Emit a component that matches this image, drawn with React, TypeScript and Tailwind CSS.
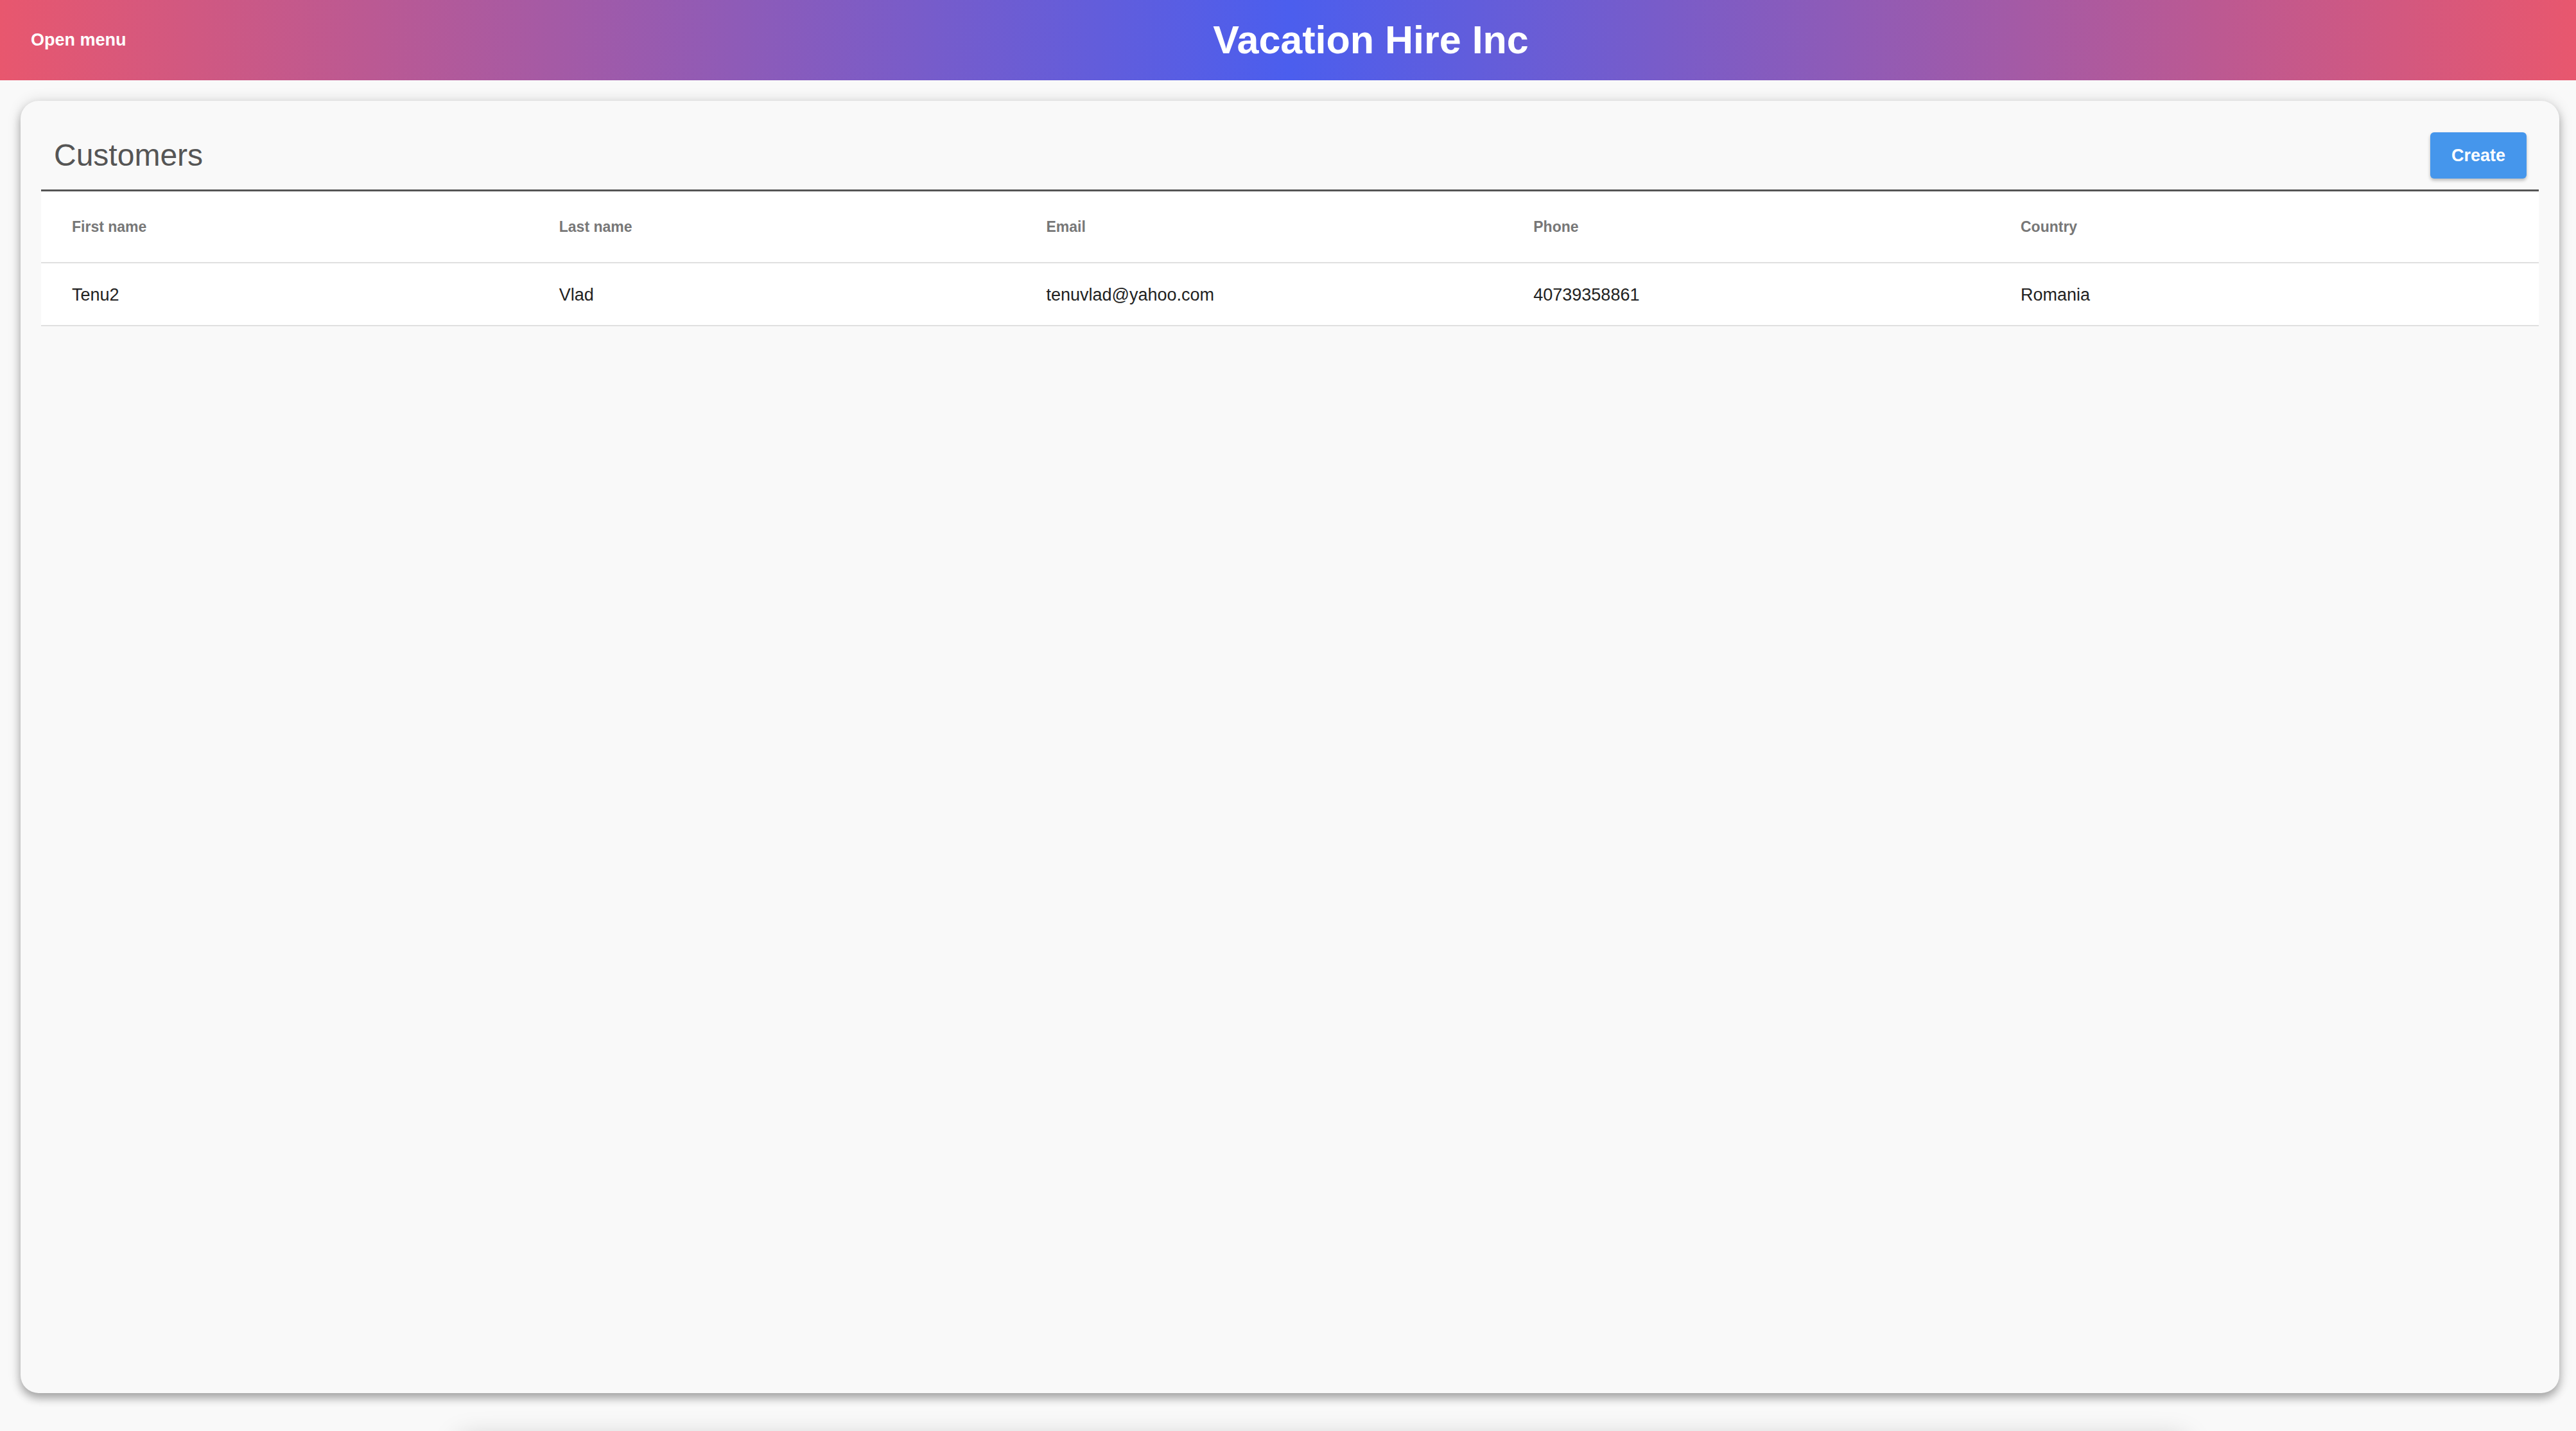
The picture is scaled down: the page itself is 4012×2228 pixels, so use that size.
import * as React from "react";

type Customer = {
  firstName: string;
  lastName: string;
  email: string;
  phone: string;
  country: string;
};

const customers: Customer[] = [
  { firstName: "Tenu2", lastName: "Vlad", email: "tenuvlad@yahoo.com", phone: "40739358861", country: "Romania" },
];

const columns = ["First name", "Last name", "Email", "Phone", "Country"];

function TopBar() {
  return (
    <header className="flex h-[125px] items-center bg-[linear-gradient(to_right,#e8576e_0%,#4b5eee_50%,#e8576e_100%)] text-white">
      <button type="button" className="w-[258px] shrink-0 pl-[48px] text-left text-[27px] font-bold">
        Open menu
      </button>
      <h1 className="flex-1 text-center text-[61px] font-bold leading-none">Vacation Hire Inc</h1>
    </header>
  );
}

function CustomersTable({ rows }: { rows: Customer[] }) {
  return (
    <div className="border-t-[3px] border-[#555] bg-white">
      <div className="grid h-[112px] grid-cols-[repeat(4,758.75px)_1fr] items-center border-b-2 border-[#e0e0e0]">
        {columns.map((c) => (
          <div key={c} className="pl-[48px] text-[23px] font-bold text-[#777]">
            {c}
          </div>
        ))}
      </div>
      {rows.map((r) => (
        <div
          key={r.email}
          className="grid h-[98px] grid-cols-[repeat(4,758.75px)_1fr] items-center border-b-2 border-[#e0e0e0] pt-[2px] text-[27px] text-[#222]"
        >
          <div className="pl-[48px]">{r.firstName}</div>
          <div className="pl-[48px]">{r.lastName}</div>
          <div className="pl-[48px]">{r.email}</div>
          <div className="pl-[48px]">{r.phone}</div>
          <div className="pl-[48px]">{r.country}</div>
        </div>
      ))}
    </div>
  );
}

export default function App() {
  return (
    <div className="h-[2228px] overflow-hidden bg-[#f9f9f9] font-['Liberation_Sans',Arial,sans-serif]">
      <TopBar />
      <main className="ml-[32px] mr-[26px] mt-[32px] h-[2012px] rounded-[28px] bg-[#f9f9f9] px-[32px] pt-[49px] shadow-[0_8px_14px_rgba(0,0,0,0.3),0_0_22px_rgba(0,0,0,0.12)]">
        <div className="mb-[17px] flex h-[72px] items-center justify-between">
          <h2 className="ml-[20px] text-[48px] font-normal text-[#555]">Customers</h2>
          <button
            type="button"
            className="mr-[19px] h-[72px] w-[150px] rounded-[6px] bg-[#4596ec] text-[27px] font-bold text-white shadow-[0_3px_5px_rgba(0,0,0,0.25)]"
          >
            Create
          </button>
        </div>
        <CustomersTable rows={customers} />
      </main>
      <div className="ml-[716px] mt-[72px] h-[120px] w-[2687px] bg-[#f9f9f9] shadow-[0_0_44px_rgba(0,0,0,0.22)]" />
    </div>
  );
}
